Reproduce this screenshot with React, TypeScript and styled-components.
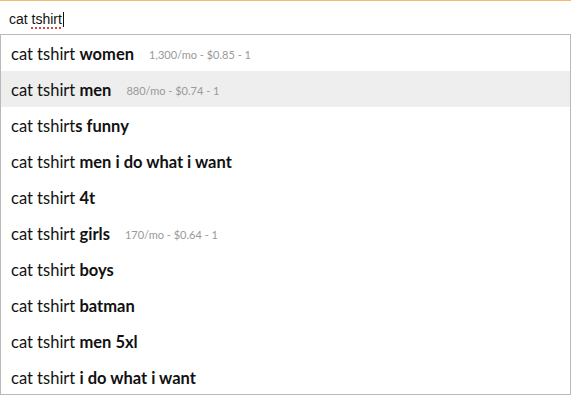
import React from "react";
import styled, { createGlobalStyle } from "styled-components";

const Global = createGlobalStyle`
  html, body { margin: 0; padding: 0; background: #fff; }
  body { font-family: "Lato", "Open Sans", sans-serif; }
`;

const Page = styled.div`
  width: 571px;
  height: 396px;
  display: flex;
  flex-direction: column;
  border-top: 1px solid #f9b96b;
  box-sizing: border-box;
`;

const InputBar = styled.div`
  height: 33px;
  box-sizing: border-box;
  padding: 3px 0 0 9px;
  display: flex;
  align-items: center;
  font-family: "Liberation Sans", Arial, sans-serif;
  font-size: 14px;
  color: #111;
`;

const Misspelled = styled.span`
  text-decoration-line: underline;
  text-decoration-style: dotted;
  text-decoration-color: #e0403f;
  text-decoration-thickness: 2px;
  text-underline-offset: 3px;
`;

const Caret = styled.span`
  display: inline-block;
  width: 1px;
  height: 15px;
  background: #111;
  margin-left: 1px;
`;

const Dropdown = styled.ul`
  list-style: none;
  margin: 0;
  padding: 0;
  border: 1px solid #b9b9b9;
  height: 361px;
  box-sizing: border-box;
`;

const Row = styled.li<{ $active?: boolean }>`
  height: 36px;
  box-sizing: border-box;
  padding: 2px 0 0 10px;
  display: flex;
  align-items: center;
  font-size: 16.5px;
  color: #111;
  background: ${(p) => (p.$active ? "#eeeeee" : "transparent")};
`;

const Phrase = styled.span`
  white-space: pre;
`;

const Bold = styled.b`
  font-weight: 700;
`;

const Meta = styled.span`
  margin-left: 15px;
  font-size: 11px;
  color: #999;
`;

const items: { pre: string; bold: string; meta?: string }[] = [
  { pre: "cat tshirt ", bold: "women", meta: "1,300/mo - $0.85 - 1" },
  { pre: "cat tshirt ", bold: "men", meta: "880/mo - $0.74 - 1" },
  { pre: "cat tshirt", bold: "s funny" },
  { pre: "cat tshirt ", bold: "men i do what i want" },
  { pre: "cat tshirt ", bold: "4t" },
  { pre: "cat tshirt ", bold: "girls", meta: "170/mo - $0.64 - 1" },
  { pre: "cat tshirt ", bold: "boys" },
  { pre: "cat tshirt ", bold: "batman" },
  { pre: "cat tshirt ", bold: "men 5xl" },
  { pre: "cat tshirt ", bold: "i do what i want" },
];

export default function App() {
  return (
    <>
      <Global />
      <Page>
        <InputBar>
          cat&nbsp;<Misspelled>tshirt</Misspelled>
          <Caret />
        </InputBar>
        <Dropdown>
          {items.map((it, i) => (
            <Row key={i} $active={i === 1}>
              <Phrase>
                {it.pre}
                <Bold>{it.bold}</Bold>
              </Phrase>
              {it.meta && <Meta>{it.meta}</Meta>}
            </Row>
          ))}
        </Dropdown>
      </Page>
    </>
  );
}
